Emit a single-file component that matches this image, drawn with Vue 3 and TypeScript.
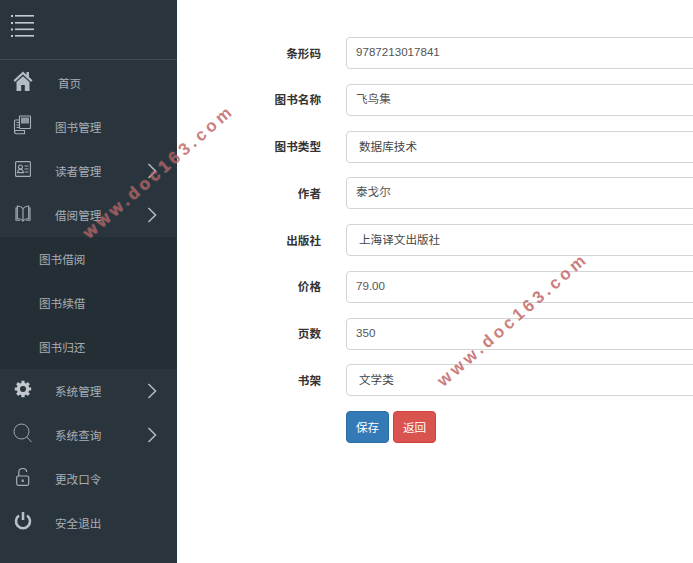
<script setup lang="ts">
interface MenuItem {
  label: string
  icon?: string
  arrow?: boolean
  sub?: boolean
  home?: boolean
}

const menu: MenuItem[] = [
  { label: '首页', icon: 'home', home: true },
  { label: '图书管理', icon: 'books' },
  { label: '读者管理', icon: 'card', arrow: true },
  { label: '借阅管理', icon: 'book', arrow: true },
  { label: '图书借阅', sub: true },
  { label: '图书续借', sub: true },
  { label: '图书归还', sub: true },
  { label: '系统管理', icon: 'gear', arrow: true },
  { label: '系统查询', icon: 'search', arrow: true },
  { label: '更改口令', icon: 'lock' },
  { label: '安全退出', icon: 'power' },
]

const fields = [
  { label: '条形码', value: '9787213017841' },
  { label: '图书名称', value: '飞鸟集' },
  { label: '图书类型', value: '数据库技术', select: true },
  { label: '作者', value: '泰戈尔' },
  { label: '出版社', value: '上海译文出版社', select: true },
  { label: '价格', value: '79.00' },
  { label: '页数', value: '350' },
  { label: '书架', value: '文学类', select: true },
]
</script>

<template>
  <div class="page">
    <aside class="sidebar">
      <div class="brand">
        <svg class="burger" width="24" height="24" viewBox="0 0 24 24">
          <g fill="#c3c9ce">
            <rect x="0" y="1" width="2" height="2" />
            <rect x="0" y="8" width="2" height="2" />
            <rect x="0" y="14.5" width="2" height="2" />
            <rect x="0" y="21" width="2" height="2" />
            <rect x="4" y="1" width="19" height="1.6" />
            <rect x="4" y="8" width="19" height="1.6" />
            <rect x="4" y="14.5" width="19" height="1.6" />
            <rect x="4" y="21" width="19" height="1.6" />
          </g>
        </svg>
      </div>
      <nav class="menu">
        <div
          v-for="item in menu"
          :key="item.label"
          class="row"
          :class="{ sub: item.sub, home: item.home }"
        >
          <svg v-if="item.icon" class="icon" width="20" height="20" viewBox="0 0 20 20">
            <g v-if="item.icon === 'home'" fill="#b4bcc3">
              <path d="M10 .5.5 9.3l1.4 1.6L10 3.4l8.1 7.5 1.4-1.6L16 6V1h-2.500v2.700z" />
              <path d="M10 5.200 3.500 11v9h4.700v-6h3.600v6h4.700v-9z" />
            </g>
            <g v-else-if="item.icon === 'books'" fill="none" stroke="#a8b0b7" stroke-width="1.100">
              <rect x="6.500" y="1" width="11" height="12.500" rx=".5" />
              <rect x="8" y="2.500" width="8" height="6" fill="#8f989f" stroke="none" />
              <path d="M6.500 5H2.500C1.700 5 1.500 5.600 1.500 6.300V17c0 1 .7 1.700 1.700 1.700h8.300V15.500H3.200c-1 0-1.700.7-1.700 1.500" />
              <path d="M3.500 7.500h3M3.500 10h3M3.500 12.500h3" />
            </g>
            <g v-else-if="item.icon === 'card'" fill="none" stroke="#a8b0b7" stroke-width="1.100">
              <rect x="2.600" y="2.600" width="14.800" height="14.800" rx="1" />
              <circle cx="7.500" cy="8" r="2" />
              <path d="M4.600 13.600c.3-2.400 1.500-3.300 2.900-3.300s2.600.9 2.900 3.300zM11.500 7h4M11.500 10h4M11.500 13h4" />
            </g>
            <g v-else-if="item.icon === 'book'" fill="none" stroke="#a8b0b7" stroke-width="1.100">
              <path d="M10 5.500C8.600 3.800 6.700 3 4.300 3v12.500c2.400 0 4.300.7 5.700 2.500 1.400-1.800 3.300-2.500 5.700-2.500V3C13.300 3 11.400 3.800 10 5.500zM10 5.500V18" />
              <path d="M4.300 5H3v12.200h4M15.700 5H17v12.200h-4" />
            </g>
            <g v-else-if="item.icon === 'gear'" fill="#c3c9ce">
              <g stroke="#c3c9ce" stroke-width="3.200">
                <path d="M10 1.800v16.400M1.800 10h16.400M4.200 4.200l11.600 11.600M15.800 4.200 4.200 15.800" />
              </g>
              <circle cx="10" cy="10" r="6.300" />
              <circle cx="10" cy="10" r="3" fill="#29343c" />
            </g>
            <g v-else-if="item.icon === 'search'" fill="none" stroke="#a0a8af" stroke-width="1">
              <circle cx="8.500" cy="8.500" r="7.500" />
              <path d="m13.800 14 4.700 5" />
            </g>
            <g v-else-if="item.icon === 'lock'" fill="none" stroke="#a8b0b7" stroke-width="1.200">
              <rect x="3.700" y="9" width="12" height="9.300" rx="1.500" />
              <path d="M5.800 9V5.300C5.800 3 7.500 1.500 9.700 1.500s3.900 1.500 3.900 3.500" />
              <path d="M9.700 12.500v2.500" stroke-width="2" />
            </g>
            <g v-else fill="none" stroke="#b8bfc5" stroke-width="2.600">
              <path d="M6 4.500a7 7 0 1 0 8 0" />
              <path d="M10 1v8" />
            </g>
          </svg>
          <span class="label">{{ item.label }}</span>
          <svg v-if="item.arrow" class="chevron" width="10" height="16" viewBox="0 0 10 16">
            <path d="m1.500 1 7 7-7 7" fill="none" stroke="#aeb6bd" stroke-width="1.600" />
          </svg>
        </div>
      </nav>
    </aside>

    <main class="content">
      <form class="form" @submit.prevent>
        <div v-for="field in fields" :key="field.label" class="field">
          <label class="field-label">{{ field.label }}</label>
          <div class="control" :class="{ select: field.select }">{{ field.value }}</div>
        </div>
        <div class="actions">
          <button type="button" class="btn save">保存</button>
          <button type="button" class="btn back">返回</button>
        </div>
      </form>
    </main>

    <div class="mark mark-a">www.doc163.com</div>
    <div class="mark mark-b">www.doc163.com</div>
  </div>
</template>

<style>
html,
body {
  margin: 0;
  background: #fff;
}
</style>

<style scoped>
.page {
  position: relative;
  display: flex;
  width: 693px;
  height: 563px;
  overflow: hidden;
  background: #fff;
  font-family: "Liberation Sans", "Noto Sans CJK SC", sans-serif;
  font-size: 11.6px;
}
.sidebar {
  flex: none;
  width: 177px;
  background: #29343c;
}
.brand {
  box-sizing: border-box;
  height: 60px;
  padding: 14px 0 0 11px;
  border-bottom: 1px solid #3c4852;
}
.burger {
  display: block;
}
.menu {
  padding-top: 1px;
}
.row {
  display: flex;
  align-items: center;
  height: 44px;
  padding-left: 13px;
  color: #a9afb5;
}
.row.sub {
  padding-left: 39px;
  background: #242e35;
}
.icon {
  flex: none;
  margin: 0 22px -1px 0;
  transform: translateY(-3px);
}
.row.home .label {
  margin-left: 3px;
}
.label {
  flex: none;
  width: 78px;
  margin-top: -1px;
}
.row.sub .label {
  width: auto;
}
.chevron {
  flex: none;
  margin-left: 14px;
}
.content {
  flex: 1;
  min-width: 0;
}
.form {
  display: flex;
  flex-direction: column;
  gap: 15px;
  padding-top: 37px;
}
.field {
  display: grid;
  grid-template-columns: 144px 420px;
  column-gap: 25px;
  align-items: center;
  margin-bottom: -0.25px;
}
.field-label {
  padding-bottom: 1px;
  text-align: right;
  font-weight: 700;
  color: #333;
}
.control {
  box-sizing: border-box;
  height: 32px;
  padding: 0 9px;
  border: 1.500px solid #d4d4d4;
  border-radius: 4px;
  line-height: 28px;
  color: #555;
}
.control.select {
  padding-top: 1px;
  padding-left: 12px;
  color: #444;
}
.actions {
  display: flex;
  gap: 4px;
  padding-left: 169px;
}
.btn {
  width: 43px;
  height: 32px;
  padding: 0;
  border: 1px solid;
  border-radius: 4px;
  font: inherit;
  color: #fff;
}
.save {
  background: #337ab7;
  border-color: #2e6da4;
}
.back {
  background: #d9534f;
  border-color: #d43f3a;
}
.mark {
  position: absolute;
  font-size: 17px;
  font-weight: 700;
  letter-spacing: 3.700px;
  white-space: nowrap;
  color: rgba(170, 40, 40, 0.62);
  text-shadow: 0 0 1px rgba(255, 255, 255, 0.55);
  transform: translate(-50%, -50%) rotate(-41deg);
  pointer-events: none;
}
.mark-a {
  left: 159px;
  top: 172px;
}
.mark-b {
  left: 513px;
  top: 319.500px;
}
</style>
